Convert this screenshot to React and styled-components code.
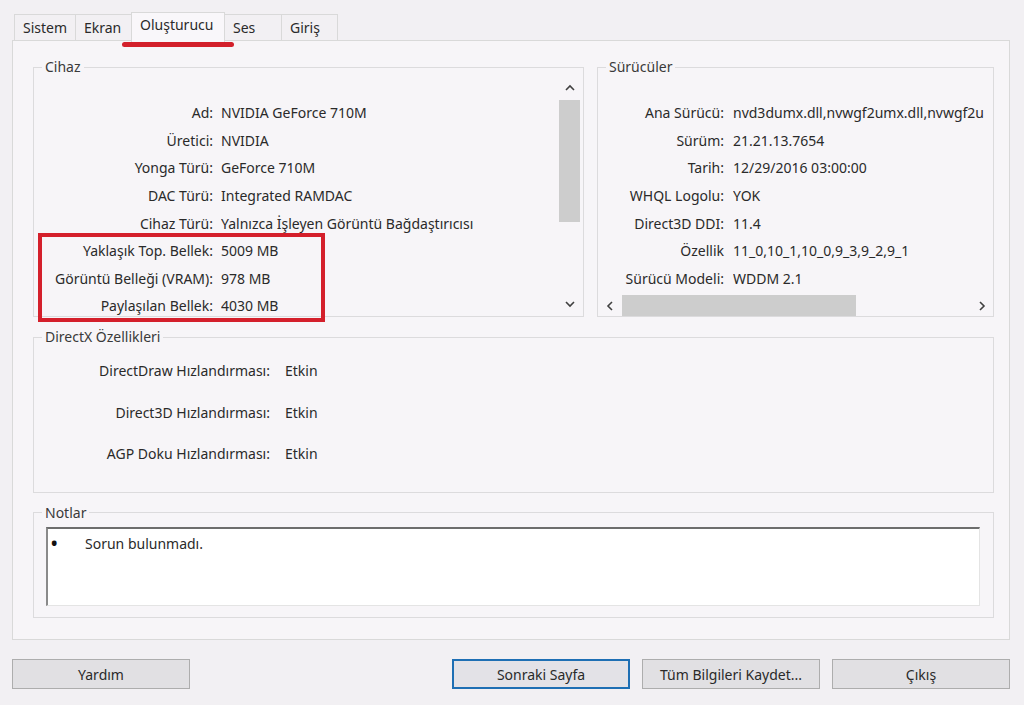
import React from "react";
import styled, { createGlobalStyle, css } from "styled-components";

const GlobalStyle = createGlobalStyle`
  html, body {
    margin: 0;
    padding: 0;
    background: #f2f0f3;
  }
  body {
    font-family: "Noto Sans", "Open Sans", sans-serif;
    font-size: 14px;
    color: #2a2a2a;
  }
`;

const cihaz = [
  ["Ad:", "NVIDIA GeForce 710M"],
  ["Üretici:", "NVIDIA"],
  ["Yonga Türü:", "GeForce 710M"],
  ["DAC Türü:", "Integrated RAMDAC"],
  ["Cihaz Türü:", "Yalnızca İşleyen Görüntü Bağdaştırıcısı"],
];

const bellek = [
  ["Yaklaşık Top. Bellek:", "5009 MB"],
  ["Görüntü Belleği (VRAM):", "978 MB"],
  ["Paylaşılan Bellek:", "4030 MB"],
];

const suruculer = [
  ["Ana Sürücü:", "nvd3dumx.dll,nvwgf2umx.dll,nvwgf2u"],
  ["Sürüm:", "21.21.13.7654"],
  ["Tarih:", "12/29/2016 03:00:00"],
  ["WHQL Logolu:", "YOK"],
  ["Direct3D DDI:", "11.4"],
  ["Özellik", "11_0,10_1,10_0,9_3,9_2,9_1"],
  ["Sürücü Modeli:", "WDDM 2.1"],
];

const directx = [
  ["DirectDraw Hızlandırması:", "Etkin"],
  ["Direct3D Hızlandırması:", "Etkin"],
  ["AGP Doku Hızlandırması:", "Etkin"],
];

const tabs = [
  { name: "Sistem", width: 62 },
  { name: "Ekran", width: 57 },
  { name: "Oluşturucu", width: 94, active: true },
  { name: "Ses", width: 58 },
  { name: "Giriş", width: 57 },
];

function Chevron({ dir }) {
  const points = {
    up: "1,6 5,2 9,6",
    down: "1,2 5,6 9,2",
    left: "6,1 2,5 6,9",
    right: "2,1 6,5 2,9",
  }[dir];
  const vertical = dir === "up" || dir === "down";
  return (
    <svg width={vertical ? 10 : 8} height={vertical ? 8 : 10} viewBox={vertical ? "0 0 10 8" : "0 0 8 10"}>
      <polyline points={points} fill="none" stroke="#404040" strokeWidth="1.6" />
    </svg>
  );
}

function App() {
  return (
    <>
      <GlobalStyle />
      <Window>
        <TabBar>
          {tabs.map((t) => (
            <Tab key={t.name} $width={t.width} $active={t.active}>
              {t.name}
            </Tab>
          ))}
        </TabBar>

        <Panel>
          <TopRow>
            <Group>
              <Legend>Cihaz</Legend>
              <ScrollArea>
                <List>
                  {cihaz.map(([k, v]) => (
                    <Row key={k} $labelWidth={179} $gap={8}>
                      <Label>{k}</Label>
                      <Value>{v}</Value>
                    </Row>
                  ))}
                  <Highlight>
                    {bellek.map(([k, v]) => (
                      <Row key={k} $labelWidth={179} $gap={8}>
                        <Label>{k}</Label>
                        <Value>{v}</Value>
                      </Row>
                    ))}
                  </Highlight>
                </List>
                <VScroll>
                  <ArrowBox $h>
                    <Chevron dir="up" />
                  </ArrowBox>
                  <VTrack>
                    <VThumb />
                  </VTrack>
                  <ArrowBox $h>
                    <Chevron dir="down" />
                  </ArrowBox>
                </VScroll>
              </ScrollArea>
            </Group>

            <Group>
              <Legend>Sürücüler</Legend>
              <DriverArea>
                <List>
                  {suruculer.map(([k, v]) => (
                    <Row key={k} $labelWidth={126} $gap={9}>
                      <Label>{k}</Label>
                      <Value>{v}</Value>
                    </Row>
                  ))}
                </List>
                <HScroll>
                  <ArrowBox>
                    <Chevron dir="left" />
                  </ArrowBox>
                  <HTrack>
                    <HThumb />
                  </HTrack>
                  <ArrowBox>
                    <Chevron dir="right" />
                  </ArrowBox>
                </HScroll>
              </DriverArea>
            </Group>
          </TopRow>

          <Group $spaced>
            <Legend>DirectX Özellikleri</Legend>
            <FeatureList>
              {directx.map(([k, v]) => (
                <FeatureRow key={k}>
                  <Label>{k}</Label>
                  <Value>{v}</Value>
                </FeatureRow>
              ))}
            </FeatureList>
          </Group>

          <Group $spaced>
            <Legend>Notlar</Legend>
            <NoteBox>
              <NoteLine>
                <Bullet>•</Bullet>
                Sorun bulunmadı.
              </NoteLine>
            </NoteBox>
          </Group>
        </Panel>

        <ButtonRow>
          <Button>Yardım</Button>
          <ButtonGroup>
            <Button $primary>Sonraki Sayfa</Button>
            <Button>Tüm Bilgileri Kaydet...</Button>
            <Button>Çıkış</Button>
          </ButtonGroup>
        </ButtonRow>
      </Window>
    </>
  );
}

const Window = styled.div`
  width: 998px;
  padding: 12px 14px 0 12px;
`;

const TabBar = styled.div`
  display: flex;
  align-items: flex-end;
  height: 28px;
  padding-left: 2px;
`;

const Tab = styled.div`
  position: relative;
  box-sizing: border-box;
  width: ${(p) => p.$width}px;
  height: 26px;
  margin-right: -1px;
  padding: 3px 0 0 8px;
  border: 1px solid #d9d9d9;
  border-bottom: none;
  background: #f2f0f3;
  color: #2a2a2a;
  ${(p) =>
    p.$active &&
    css`
      z-index: 2;
      height: 30px;
      margin-bottom: -2px;
      padding-top: 2px;
      background: #f9f7fa;
      &::after {
        content: "";
        position: absolute;
        left: -10px;
        right: -10px;
        bottom: -5px;
        height: 5px;
        border-radius: 3px;
        background: #d3202b;
      }
    `}
`;

const Panel = styled.div`
  box-sizing: border-box;
  height: 600px;
  padding: 17px 15px 0 20px;
  border: 1px solid #d9d9d9;
  background: #f7f5f8;
`;

const TopRow = styled.div`
  display: grid;
  grid-template-columns: 551px 1fr;
  gap: 13px;
`;

const Group = styled.fieldset`
  min-width: 0;
  margin: ${(p) => (p.$spaced ? "11px 0 0" : "0")};
  padding: 0;
  border: 1px solid #dcdbdd;
`;

const Legend = styled.legend`
  margin-left: 8px;
  padding: 0 3px;
  line-height: 18px;
  color: #3a3a3a;
`;

const ScrollArea = styled.div`
  display: flex;
  height: 240px;
`;

const DriverArea = styled.div`
  display: flex;
  flex-direction: column;
  height: 240px;
  overflow: hidden;
`;

const List = styled.div`
  flex: 1;
  min-width: 0;
  padding-top: 23px;
`;

const Row = styled.div`
  display: grid;
  grid-template-columns: ${(p) => p.$labelWidth}px 1fr;
  column-gap: ${(p) => p.$gap}px;
  height: 27.6px;
  align-items: center;
  white-space: nowrap;
`;

const Label = styled.span`
  text-align: right;
`;

const Value = styled.span`
  overflow: hidden;
`;

const Highlight = styled.div`
  position: relative;
  &::after {
    content: "";
    position: absolute;
    top: -4px;
    bottom: -2px;
    left: 4px;
    width: 287px;
    box-sizing: border-box;
    border: 4px solid #d41f2b;
    pointer-events: none;
  }
`;

const VScroll = styled.div`
  display: flex;
  flex-direction: column;
  width: 21px;
  margin: 1px 3px 2px 0;
`;

const ArrowBox = styled.div`
  display: flex;
  align-items: center;
  justify-content: center;
  flex: none;
  width: 21px;
  height: ${(p) => (p.$h ? "21px" : "auto")};
`;

const VTrack = styled.div`
  flex: 1;
  padding-top: 2px;
`;

const VThumb = styled.div`
  height: 122px;
  background: #cdcdcd;
`;

const HScroll = styled.div`
  display: flex;
  height: 21px;
  margin: 0 1px;
`;

const HTrack = styled.div`
  flex: 1;
  padding-left: 2px;
  display: flex;
  align-items: stretch;
`;

const HThumb = styled.div`
  width: 234px;
  background: #cdcdcd;
`;

const FeatureList = styled.div`
  padding: 4px 0 17px;
`;

const FeatureRow = styled.div`
  display: grid;
  grid-template-columns: 236px 1fr;
  column-gap: 15px;
  height: 41.5px;
  align-items: center;
`;

const NoteBox = styled.div`
  box-sizing: border-box;
  height: 79px;
  margin: 5px 13px 11px 12px;
  padding: 6px 0 0 3px;
  background: #ffffff;
  border-top: 2px solid #6d6d6d;
  border-left: 2px solid #8a8a8a;
  border-right: 1px solid #e4e4e4;
  border-bottom: 1px solid #e4e4e4;
`;

const NoteLine = styled.div`
  display: flex;
  align-items: center;
  line-height: 18px;
`;

const Bullet = styled.span`
  width: 34px;
  font-size: 17px;
  font-weight: 700;
  color: #111;
`;

const ButtonRow = styled.div`
  display: flex;
  justify-content: space-between;
  margin-top: 19px;
`;

const ButtonGroup = styled.div`
  display: flex;
  gap: 12px;
`;

const Button = styled.button`
  box-sizing: border-box;
  width: 178px;
  height: 30px;
  padding: 0;
  font-family: inherit;
  font-size: 14px;
  color: #2a2a2a;
  background: #e1e0e3;
  border: 1px solid #adadad;
  ${(p) =>
    p.$primary &&
    css`
      border: 2px solid #1e6fb4;
      background: #e3e2e7;
    `}
`;

export default App;
